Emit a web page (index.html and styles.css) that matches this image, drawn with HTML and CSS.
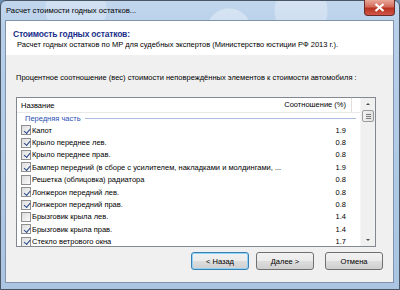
FILE: index.html
```html
<!DOCTYPE html>
<html lang="ru">
<head>
    <meta charset="UTF-8">
    <title>Расчет стоимости годных остатков</title>
    <link rel="stylesheet" href="styles.css">
</head>
<body>
    <div class="window">
        <div class="titlebar">
            <span class="title">Расчет стоимости годных остатков...</span>
            <div class="close-btn">
                <svg width="11" height="9" viewBox="0 0 11 9"><path d="M1.5 1 L9.5 8 M9.5 1 L1.5 8" stroke="#fff" stroke-width="2.2"/></svg>
            </div>
        </div>
        <div class="client">
            <div class="wizard-header">
                <h1>Стоимость годных остатков:</h1>
                <p>Расчет годных остатков по МР для судебных экспертов (Министерство юстиции РФ 2013 г.).</p>
            </div>
            <div class="wizard-body">
                <p class="caption">Процентное соотношение (вес) стоимости неповреждённых элементов к стоимости автомобиля :</p>
                <div class="listview">
                    <div class="list-main">
                        <div class="list-head">
                            <div class="col-name">Название</div>
                            <div class="col-value">Соотношение (%)</div>
                            <div class="col-rest"></div>
                        </div>
                        <div class="group-row"><span>Передняя часть</span></div>
                        <div class="row"><span class="chk on"></span><span class="name">Капот</span><span class="value">1.9</span></div>
                        <div class="row"><span class="chk on"></span><span class="name">Крыло переднее лев.</span><span class="value">0.8</span></div>
                        <div class="row"><span class="chk on"></span><span class="name">Крыло переднее прав.</span><span class="value">0.8</span></div>
                        <div class="row"><span class="chk on"></span><span class="name">Бампер передний (в сборе с усилителем, накладками и молдингами, ...</span><span class="value">1.9</span></div>
                        <div class="row"><span class="chk"></span><span class="name">Решетка (облицовка) радиатора</span><span class="value">0.8</span></div>
                        <div class="row"><span class="chk on"></span><span class="name">Лонжерон передний лев.</span><span class="value">0.8</span></div>
                        <div class="row"><span class="chk on"></span><span class="name">Лонжерон передний прав.</span><span class="value">0.8</span></div>
                        <div class="row"><span class="chk"></span><span class="name">Брызговик крыла лев.</span><span class="value">1.4</span></div>
                        <div class="row"><span class="chk on"></span><span class="name">Брызговик крыла прав.</span><span class="value">1.4</span></div>
                        <div class="row"><span class="chk on"></span><span class="name">Стекло ветрового окна</span><span class="value">1.7</span></div>
                    </div>
                    <div class="scrollbar">
                        <div class="arrow up"></div>
                        <div class="thumb"><i></i><i></i><i></i></div>
                        <div class="track"></div>
                        <div class="arrow down"></div>
                    </div>
                </div>
            </div>
            <div class="buttons">
                <button class="btn default">&lt; Назад</button>
                <button class="btn">Далее &gt;</button>
                <button class="btn cancel">Отмена</button>
            </div>
        </div>
    </div>
</body>
</html>
```
FILE: styles.css
```css
body {
    margin: 0;
    padding: 0;
    font-family: 'Liberation Sans', Arial, sans-serif;
    font-size: 7.5px;
    color: #000;
    background: #6d8fb5;
}
.window {
    width: 400px;
    height: 290px;
    box-sizing: border-box;
    border: 1px solid #4a5664;
    border-radius: 6px 6px 0 0;
    padding: 0 5px 6px 4px;
    display: flex;
    flex-direction: column;
    background:
        radial-gradient(circle at 228px 30px, rgba(255,255,255,0.35) 0 22px, transparent 23px),
        radial-gradient(circle at 300px 10px, rgba(255,255,255,0.3) 0 26px, transparent 27px),
        radial-gradient(circle at 75px 8px, rgba(255,255,255,0.25) 0 30px, transparent 31px),
        linear-gradient(#c2d7ee, #b7cfe9 30px, #aac4e2);
}
.titlebar {
    height: 19px;
    display: flex;
    align-items: flex-start;
    justify-content: space-between;
}
.title {
    padding: 5px 0 0 1px;
    font-size: 7.7px;
    line-height: 9px;
    color: #000;
}
.close-btn {
    width: 31px;
    height: 16px;
    margin-top: -1px;
    margin-right: -1px;
    box-sizing: border-box;
    border: 1px solid #6b2b2b;
    border-top: none;
    border-radius: 0 0 4px 4px;
    background: linear-gradient(#e9a99a, #d36a5a 45%, #b8321f 55%, #d0574a);
    display: flex;
    align-items: center;
    justify-content: center;
}
.client {
    flex: 1;
    border: 1px solid #8294ac;
    background: #f0f0f0;
    display: flex;
    flex-direction: column;
}
.wizard-header {
    background: #fff;
    height: 34px;
    box-sizing: border-box;
    padding: 7px 0 0 7px;
}
.wizard-header h1 {
    margin: 0;
    font-size: 8.5px;
    letter-spacing: -0.2px;
    line-height: 12px;
    font-weight: bold;
    color: #1b2f8a;
}
.wizard-header p {
    margin: 0;
    padding-left: 4px;
    line-height: 10px;
}
.wizard-body {
    padding: 18px 17px 0 10px;
}
.caption {
    margin: 0;
    line-height: 10px;
    white-space: nowrap;
}
.listview {
    margin-top: 14px;
    height: 150px;
    box-sizing: border-box;
    border: 1px solid #828790;
    background: #fff;
    display: flex;
    overflow: hidden;
}
.list-main {
    flex: 1;
}
.list-head {
    height: 14px;
    display: flex;
    align-items: center;
    border-bottom: 1px solid #e8e8e8;
}
.col-name {
    flex: 1;
    padding-left: 4px;
}
.col-value {
    width: 82px;
    text-align: right;
    padding-right: 5px;
    border-right: 1px solid #e0e0e0;
    line-height: 14px;
}
.col-rest {
    width: 8px;
}
.group-row {
    height: 11px;
    display: flex;
    align-items: center;
    padding-left: 8px;
    margin-top: 0;
    color: #2b4fb3;
}
.group-row::after {
    content: "";
    flex: 1;
    height: 1px;
    margin: 0 4px 0 4px;
    background: #a8bde0;
}
.row {
    height: 12.4px;
    display: flex;
    align-items: center;
    padding-left: 4px;
}
.chk {
    width: 10px;
    height: 10px;
    box-sizing: border-box;
    border: 1px solid #8f8f8f;
    background: linear-gradient(135deg, #dcdcdc, #fbfbfb);
    margin-right: 1px;
    position: relative;
}
.chk.on::after {
    content: "";
    position: absolute;
    left: 1.5px;
    top: 0.5px;
    width: 5px;
    height: 3px;
    border-left: 1.5px solid #2a4a88;
    border-bottom: 1.5px solid #2a4a88;
    transform: rotate(-50deg) translate(-1px, 1px);
}
.row .name {
    flex: 1;
    white-space: nowrap;
    overflow: hidden;
}
.row .value {
    width: 40px;
    text-align: right;
    padding-right: 14px;
}
.scrollbar {
    width: 14px;
    background: #f0f0f0;
    border-left: 1px solid #f6f6f6;
    display: flex;
    flex-direction: column;
}
.arrow {
    height: 12px;
    position: relative;
}
.arrow::after {
    content: "";
    position: absolute;
    left: 5px;
    border-left: 2px solid transparent;
    border-right: 2px solid transparent;
}
.arrow.up::after {
    top: 5px;
    border-bottom: 2px solid #4d4d4d;
}
.arrow.down::after {
    top: 5px;
    border-top: 2px solid #4d4d4d;
}
.thumb {
    height: 12px;
    margin: 0 1px;
    box-sizing: border-box;
    border: 1px solid #9a9a9a;
    border-radius: 2px;
    background: linear-gradient(90deg, #f2f2f2, #e0e0e0);
    display: flex;
    flex-direction: column;
    align-items: center;
    justify-content: center;
    gap: 1px;
}
.thumb i {
    width: 5px;
    height: 1px;
    background: #7a7a7a;
}
.track {
    flex: 1;
}
.buttons {
    display: flex;
    justify-content: flex-end;
    gap: 7px;
    padding: 5px 10px 0 0;
}
.btn {
    width: 58px;
    height: 18px;
    box-sizing: border-box;
    font-family: 'Liberation Sans', Arial, sans-serif;
    font-size: 7.5px;
    color: #000;
    border: 1px solid #707070;
    border-radius: 3px;
    background: linear-gradient(#f2f2f2, #ebebeb 50%, #dddddd 51%, #cfcfcf);
    padding: 0;
}
.btn.default {
    border-color: #3c7fb1;
    box-shadow: inset 0 0 0 1px #8fd3f7;
}
.btn.cancel {
    margin-left: 4px;
}
```
